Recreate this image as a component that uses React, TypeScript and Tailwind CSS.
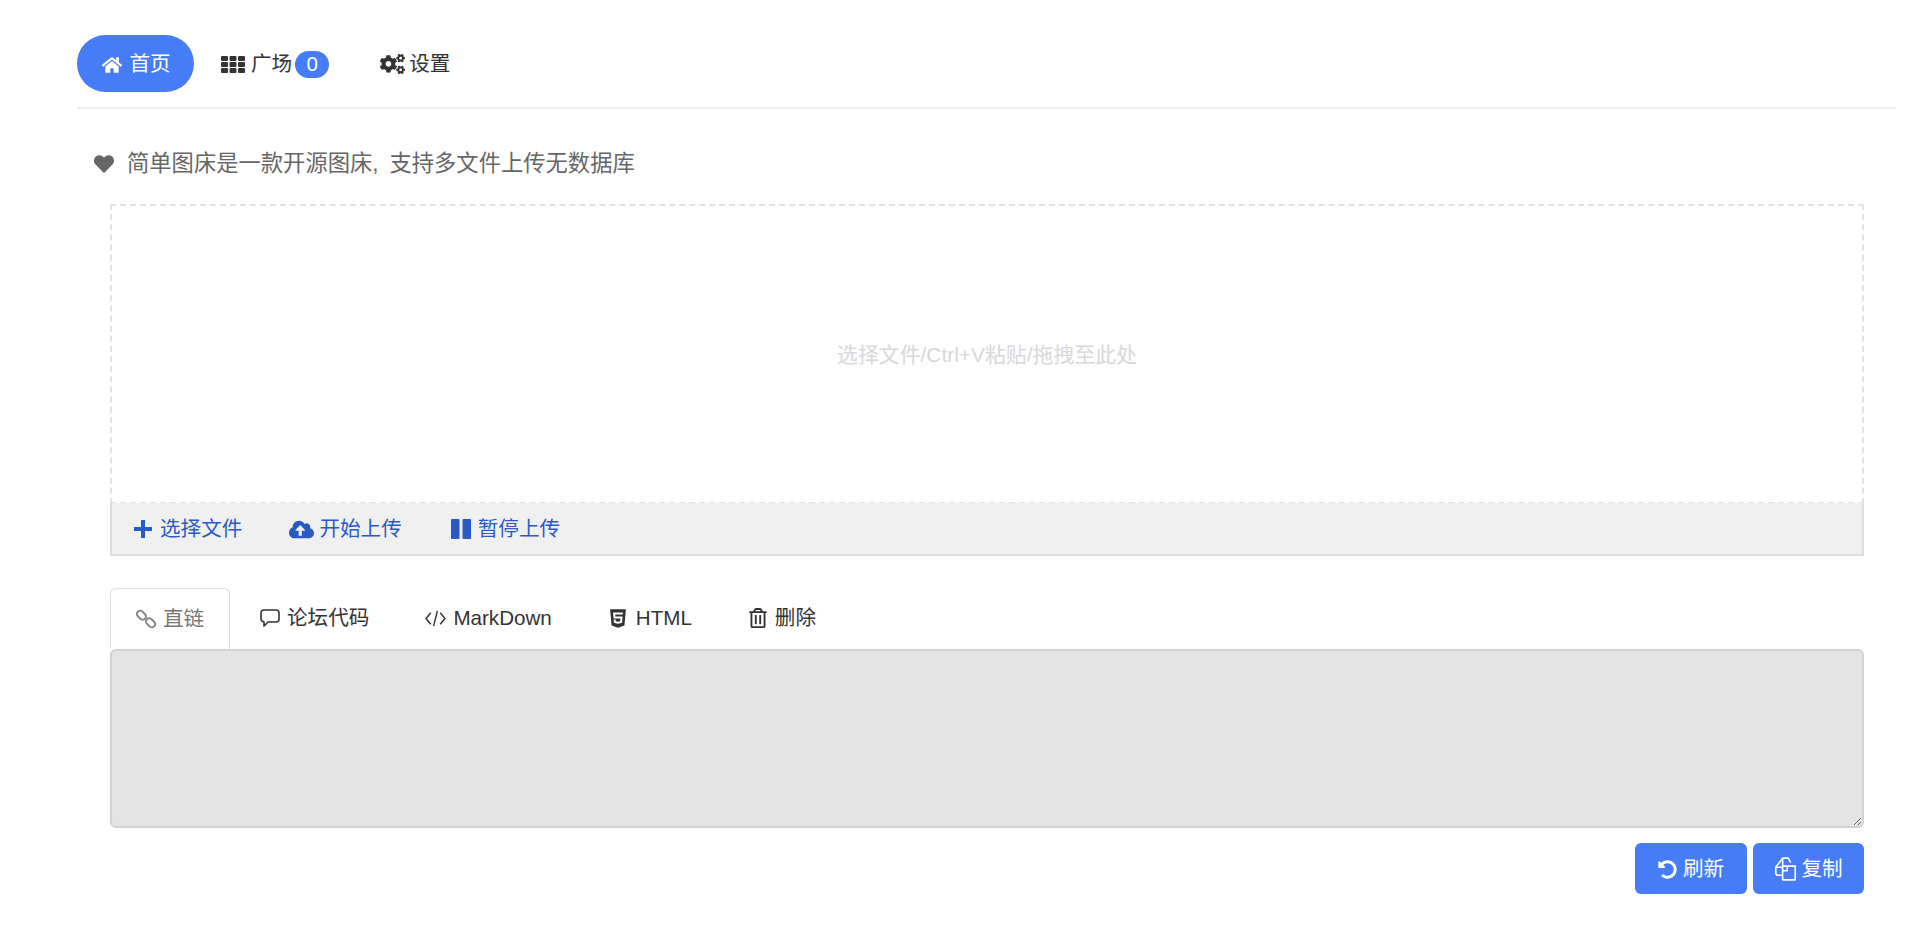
import { FaCloudUploadAlt, FaCogs, FaHeart, FaHome, FaHtml5, FaRegTrashAlt, FaUndoAlt } from "react-icons/fa"

const font = "font-['Liberation_Sans','Noto_Sans_CJK_SC',sans-serif]"

const ThIcon = () => (
    <svg viewBox="0 0 24 17" className="w-[24px] h-[17px] mr-[6px]" fill="currentColor">
        {[0, 6, 12].map((y) =>
            [0, 8.5, 17].map((x) => <rect key={`${x}-${y}`} x={x} y={y} width="7" height="5" rx="1" />)
        )}
    </svg>
)

const PlusIcon = () => (
    <svg viewBox="0 0 18 18" className="w-[18px] h-[18px]" fill="currentColor">
        <path d="M7 0h4v7h7v4h-7v7H7v-7H0V7h7z" />
    </svg>
)

const PauseIcon = () => (
    <svg viewBox="0 0 20 20" className="w-[20px] h-[20px]" fill="currentColor">
        <rect x="0" y="0" width="8.5" height="20" rx="1" />
        <rect x="11.5" y="0" width="8.5" height="20" rx="1" />
    </svg>
)

const LinkIcon = () => (
    <svg viewBox="0 0 20 20" className="w-[20px] h-[20px]" fill="none" stroke="currentColor" strokeWidth="2">
        <rect x="0.5" y="3" width="10" height="6.5" rx="3.2" transform="rotate(45 5.5 6.2)" />
        <rect x="9.5" y="10.5" width="10" height="6.5" rx="3.2" transform="rotate(45 14.5 13.8)" />
    </svg>
)

const CommentIcon = () => (
    <svg viewBox="0 0 20 20" className="w-[20px] h-[20px]" fill="none" stroke="currentColor" strokeWidth="1.6" strokeLinejoin="round">
        <path d="M4 2h12a3 3 0 0 1 3 3v6a3 3 0 0 1-3 3H8l-4 4v-4.2A3 3 0 0 1 1 11V5a3 3 0 0 1 3-3z" />
    </svg>
)

const CodeIcon = () => (
    <svg viewBox="0 0 24 20" className="w-[23px] h-[19px]" fill="none" stroke="currentColor" strokeWidth="1.5">
        <path d="M7 4 2 10l5 6M17 4l5 6-5 6M14 2l-4 16" />
    </svg>
)

const FilesIcon = () => (
    <svg viewBox="3 2 19 21" className="w-[23px] h-[24px]" fill="none" stroke="currentColor" strokeWidth="1.4" strokeLinejoin="round">
        <path d="M10 18H6a2 2 0 0 1-2-2v-5l6-8h5l2 4" />
        <path d="M4 11h6V3" />
        <path d="M10 10h11v12H10z" />
        <path d="M14 10v4h-4" />
    </svg>
)

export default function App() {
    return (
        <div className={`${font} min-h-[947px] bg-white pl-[77px] pr-[24px] pt-[35px] text-[20.6px] text-[#333]`}>
            <nav className="flex items-center pb-[15px] border-b-2 border-[#eeeeee]">
                <a className="flex items-center justify-center gap-[7px] w-[117px] h-[57px] pt-[2px] pl-[2px] rounded-full bg-[#467cf6] text-white">
                    <FaHome className="w-[20px] h-[20px]" /> 首页
                </a>
                <a className="flex items-center ml-[27px] pt-[2px]">
                    <ThIcon /> 广场
                    <span className="ml-[3px] flex items-center justify-center w-[34px] h-[27px] rounded-full bg-[#467cf6] text-white">0</span>
                </a>
                <a className="flex items-center ml-[51px] pt-[2px]">
                    <FaCogs className="w-[25px] h-[20px] mr-[4px]" /> 设置
                </a>
            </nav>

            <p className="flex items-center mt-[38px] ml-[16px] text-[22.3px] leading-[34px] text-[#666]">
                <FaHeart className="w-[22px] h-[20px] mr-[12px]" /> 简单图床是一款开源图床,<span className="ml-[11px]">支持多文件上传无数据库</span>
            </p>

            <div className="ml-[33px] mr-[32px] mt-[23px]">
                <div className="flex items-center justify-center h-[300px] pt-[2px] border-2 border-dashed border-[#e2e2e2] text-[20.9px] text-[#d8d8d8]">
                    选择文件/Ctrl+V粘贴/拖拽至此处
                </div>
                <div className="flex items-center h-[53px] pl-[22px] pt-[2px] -mt-[1px] gap-[47px] bg-[#f0f0f0] border-x-2 border-b-2 border-[#dddddd] text-[#2a5bc4]">
                    <a className="flex items-center gap-[8px]"><PlusIcon /> 选择文件</a>
                    <a className="flex items-center gap-[5px]"><FaCloudUploadAlt className="w-[25px] h-[25px]" /> 开始上传</a>
                    <a className="flex items-center gap-[7px] ml-[2px]"><PauseIcon /> 暂停上传</a>
                </div>

                <div className="flex items-center mt-[32px] h-[61px]">
                    <a className="flex items-center justify-center gap-[7px] w-[120px] h-[61px] border border-b-0 border-[#dddddd] rounded-t-md text-[#777]">
                        <span className="text-[#888]"><LinkIcon /></span> 直链
                    </a>
                    <a className="flex items-center gap-[7px] ml-[30px]"><CommentIcon /> 论坛代码</a>
                    <a className="flex items-center gap-[6px] ml-[55px]"><CodeIcon /> MarkDown</a>
                    <a className="flex items-center gap-[8px] ml-[56px]"><FaHtml5 className="w-[20px] h-[21px]" /> HTML</a>
                    <a className="flex items-center gap-[8px] ml-[57px]"><FaRegTrashAlt className="w-[18px] h-[20px]" /> 删除</a>
                </div>
                <textarea disabled className="block w-full h-[179px] bg-[#e4e4e4] border-2 border-[#d2d2d2] rounded-md resize-y" />
                <div className="flex justify-end gap-[6px] mt-[15px]">
                    <a className="flex items-center justify-center gap-[6px] w-[112px] h-[51px] pt-[1px] rounded-md bg-[#467cf6] text-white">
                        <FaUndoAlt className="w-[19px] h-[19px]" /> 刷新
                    </a>
                    <a className="flex items-center justify-center gap-[4px] w-[111px] h-[51px] pt-[1px] rounded-md bg-[#467cf6] text-white">
                        <FilesIcon /> 复制
                    </a>
                </div>
            </div>
        </div>
    )
}
